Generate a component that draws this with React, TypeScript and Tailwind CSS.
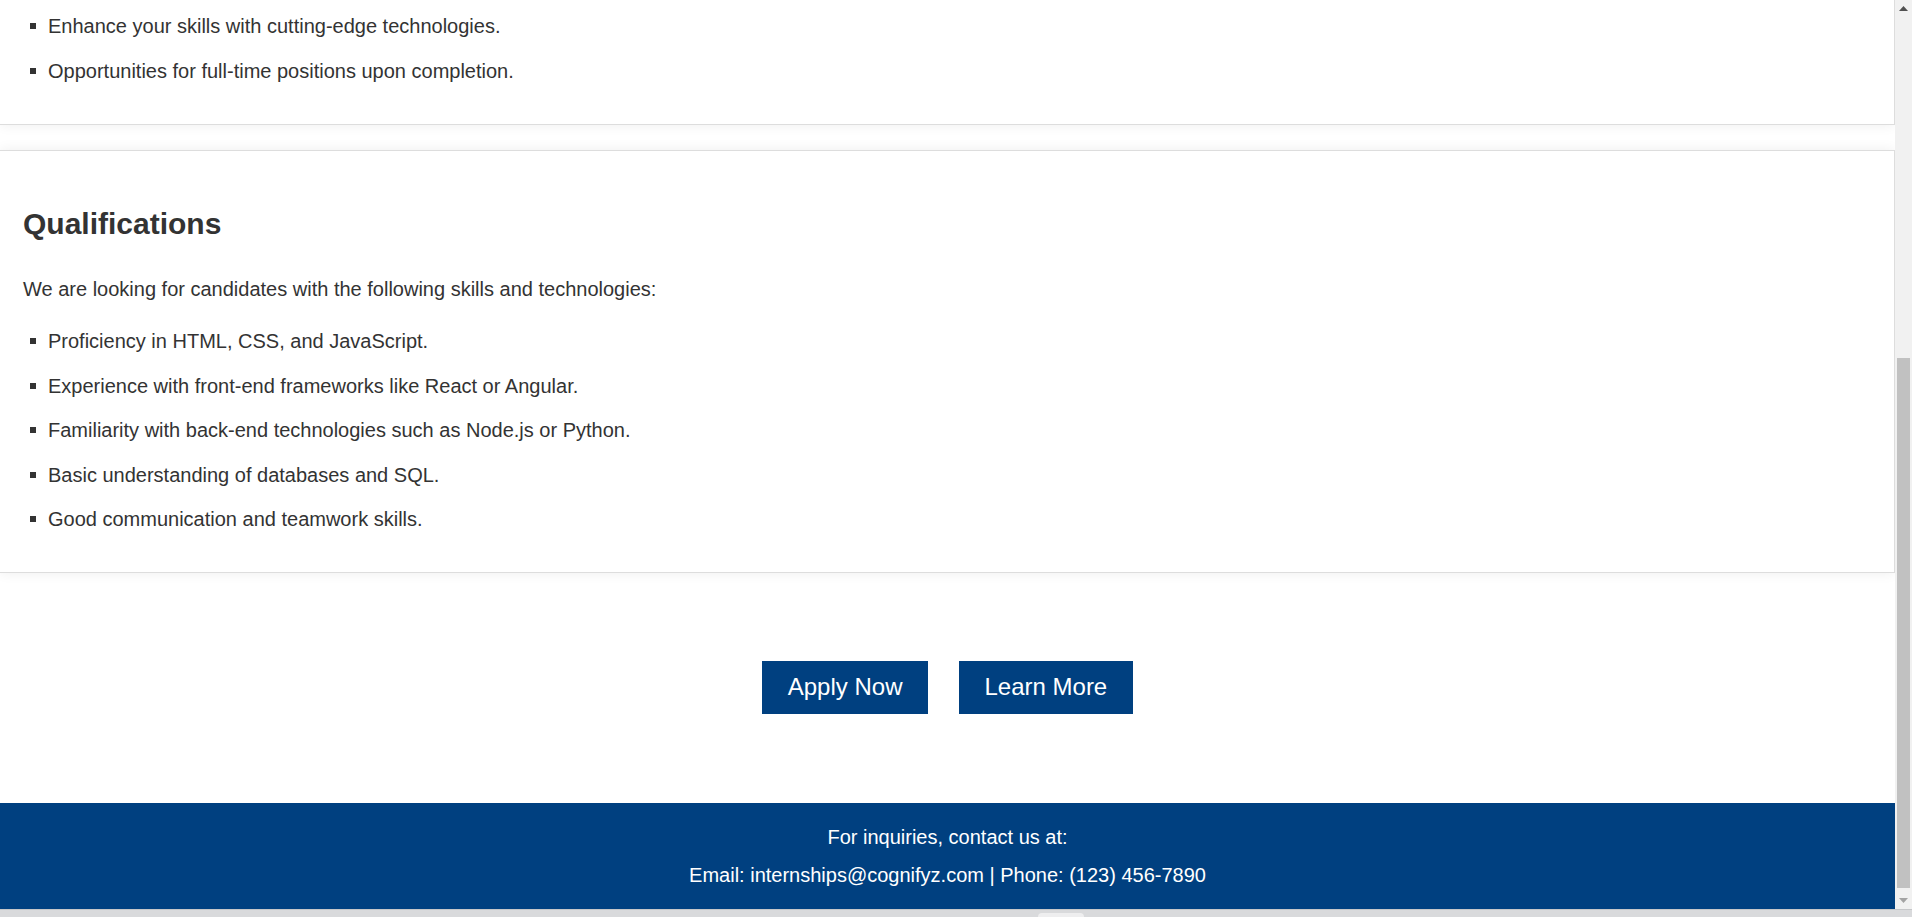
import React from "react";

const font = { fontFamily: '"Liberation Sans", Arial, sans-serif' };

function Item({ children }: { children: React.ReactNode }) {
  return (
    <li className="flex leading-[32px] mb-[12.5px]">
      <span className="ml-[7px] mr-[12px] mt-[13px] h-[6px] w-[6px] shrink-0 bg-[#333333]" />
      <span>{children}</span>
    </li>
  );
}

export default function App() {
  return (
    <div
      className="w-[1912px] h-[917px] overflow-hidden flex flex-col bg-white text-[20px] text-[#333333]"
      style={font}
    >
      <div className="flex h-[909px]">
        <main className="w-[1895px] shrink-0 flex flex-col overflow-hidden">
          {/* Card 1 (partially scrolled out) */}
          <section className="bg-white border-b border-r border-[#dddddd] shadow-[0_0_12px_rgba(0,0,0,0.07)] pl-[23px] pr-[23px] pt-[10px] pb-[25px]">
            <ul>
              <Item>Enhance your skills with cutting-edge technologies.</Item>
              <Item>Opportunities for full-time positions upon completion.</Item>
            </ul>
          </section>

          {/* Card 2 */}
          <section className="mt-[25px] bg-white border-t border-b border-r border-[#dddddd] shadow-[0_0_12px_rgba(0,0,0,0.07)] pl-[23px] pr-[23px] pt-[25px] pb-[24.5px]">
            <h2 className="mt-[24px] text-[30px] leading-[48px] font-bold text-[#333333]">
              Qualifications
            </h2>
            <p className="mt-[25px] leading-[32px]">
              We are looking for candidates with the following skills and technologies:
            </p>
            <ul className="mt-[20px]">
              <Item>Proficiency in HTML, CSS, and JavaScript.</Item>
              <Item>Experience with front-end frameworks like React or Angular.</Item>
              <Item>Familiarity with back-end technologies such as Node.js or Python.</Item>
              <Item>Basic understanding of databases and SQL.</Item>
              <Item>Good communication and teamwork skills.</Item>
            </ul>
          </section>

          {/* Buttons */}
          <div className="pt-[87.5px] pb-[89px] flex justify-center gap-[31px]">
            <button className="bg-[#004080] text-white text-[24px] leading-[28px] px-[25.5px] py-[12.5px]">
              Apply Now
            </button>
            <button className="bg-[#004080] text-white text-[24px] leading-[28px] px-[25.5px] py-[12.5px]">
              Learn More
            </button>
          </div>

          {/* Footer */}
          <footer className="bg-[#004080] text-white text-center pt-[18px] pb-[19px]">
            <p className="leading-[32px]">For inquiries, contact us at:</p>
            <p className="leading-[32px] mt-[6px]">
              Email: internships@cognifyz.com | Phone: (123) 456-7890
            </p>
          </footer>
        </main>

        {/* Vertical scrollbar */}
        <div className="relative z-10 w-[17px] shrink-0 bg-[#f1f1f1] flex flex-col">
          <div className="h-[17px] flex items-center justify-center">
            <svg width="9" height="5" viewBox="0 0 9 5">
              <polygon points="0,5 9,5 4.5,0" fill="#505050" />
            </svg>
          </div>
          <div className="flex-1 flex flex-col">
            <div className="h-[341px]" />
            <div className="mx-[2px] h-[530px] bg-[#c1c1c1]" />
          </div>
          <div className="h-[17px] flex items-center justify-center">
            <svg width="9" height="5" viewBox="0 0 9 5">
              <polygon points="0,0 9,0 4.5,5" fill="#a3a3a3" />
            </svg>
          </div>
        </div>
      </div>

      {/* Bottom strip */}
      <div className="relative h-[8px] bg-[#d9dadc] border-t border-[#c6c7c9]">
        <div className="absolute left-[1038px] top-[3px] w-[46px] h-[6px] rounded-t-[4px] bg-[#eeeeef]" />
      </div>
    </div>
  );
}
